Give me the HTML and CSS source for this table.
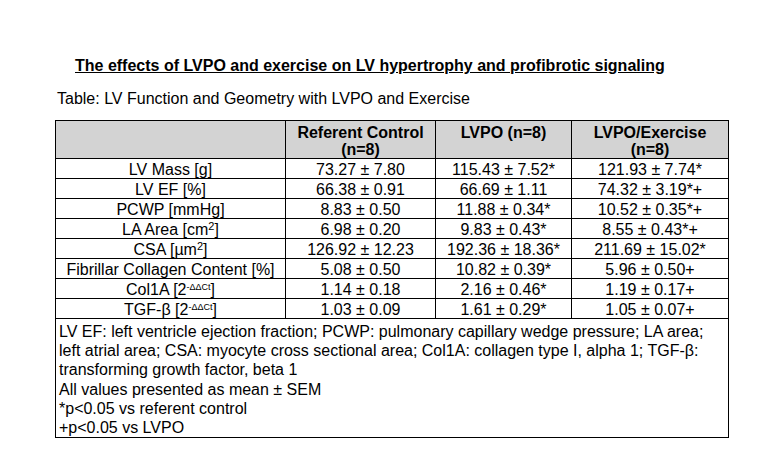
FILE: index.html
```html
<!DOCTYPE html>
<html>
<head>
<meta charset="utf-8">
<link rel="stylesheet" href="styles.css">
</head>
<body>
<div class="page">
  <h1 class="title">The effects of LVPO and exercise on LV hypertrophy and profibrotic signaling</h1>
  <p class="caption">Table: LV Function and Geometry with LVPO and Exercise</p>
  <table class="data">
    <colgroup>
      <col class="c1"><col class="c2"><col class="c3"><col class="c4">
    </colgroup>
    <thead>
      <tr>
        <th></th>
        <th>Referent Control (n=8)</th>
        <th class="top">LVPO (n=8)</th>
        <th>LVPO/Exercise (n=8)</th>
      </tr>
    </thead>
    <tbody>
      <tr><td>LV Mass [g]</td><td>73.27 ± 7.80</td><td>115.43 ± 7.52*</td><td>121.93 ± 7.74*</td></tr>
      <tr><td>LV EF [%]</td><td>66.38 ± 0.91</td><td>66.69 ± 1.11</td><td>74.32 ± 3.19*+</td></tr>
      <tr><td>PCWP [mmHg]</td><td>8.83 ± 0.50</td><td>11.88 ± 0.34*</td><td>10.52 ± 0.35*+</td></tr>
      <tr><td>LA Area [cm<sup>2</sup>]</td><td>6.98 ± 0.20</td><td>9.83 ± 0.43*</td><td>8.55 ± 0.43*+</td></tr>
      <tr><td>CSA [µm<sup>2</sup>]</td><td>126.92 ± 12.23</td><td>192.36 ± 18.36*</td><td>211.69 ± 15.02*</td></tr>
      <tr><td>Fibrillar Collagen Content [%]</td><td>5.08 ± 0.50</td><td>10.82 ± 0.39*</td><td>5.96 ± 0.50+</td></tr>
      <tr><td>Col1A [2<sup class="sm">-ΔΔCt</sup>]</td><td>1.14 ± 0.18</td><td>2.16 ± 0.46*</td><td>1.19 ± 0.17+</td></tr>
      <tr><td>TGF-β [2<sup class="sm">-ΔΔCt</sup>]</td><td>1.03 ± 0.09</td><td>1.61 ± 0.29*</td><td>1.05 ± 0.07+</td></tr>
      <tr>
        <td colspan="4" class="notes">LV EF: left ventricle ejection fraction; PCWP: pulmonary capillary wedge pressure; LA area; left atrial area; CSA: myocyte cross sectional area; Col1A: collagen type I, alpha 1; TGF-β: transforming growth factor, beta 1<br>All values presented as mean ± SEM<br>*p&lt;0.05 vs referent control<br>+p&lt;0.05 vs LVPO</td>
      </tr>
    </tbody>
  </table>
</div>
</body>
</html>
```
FILE: styles.css
```css
html, body {
  margin: 0;
  padding: 0;
  background: #ffffff;
}
.page {
  padding: 56px 0 0 55px;
  font-family: "Liberation Sans", Arial, sans-serif;
  color: #000;
}
.title {
  margin: 0 0 0 20px;
  font-size: 16px;
  font-weight: bold;
  text-decoration: underline;
  line-height: 20px;
}
.caption {
  margin: 13px 0 0 2px;
  font-size: 16px;
  line-height: 20px;
}
.data {
  margin-top: 11px;
  border-collapse: collapse;
  table-layout: fixed;
  width: 673px;
  font-size: 16px;
}
.c1 { width: 230px; }
.c2 { width: 150px; }
.c3 { width: 136px; }
.c4 { width: 157px; }
.data th, .data td {
  border: 1px solid #000;
  padding: 2px 4px 0 4px;
  text-align: center;
  line-height: 17px;
}
.data th {
  background: #d3d3d3;
  font-weight: bold;
  vertical-align: top;
  padding-top: 3px;
}
.data sup {
  font-size: 11px;
  line-height: 0;
  vertical-align: 5px;
}
.data sup.sm {
  font-size: 9px;
}
.data td.notes {
  text-align: left;
  padding: 3px 3px 0 3px;
  line-height: 19.2px;
}
```
